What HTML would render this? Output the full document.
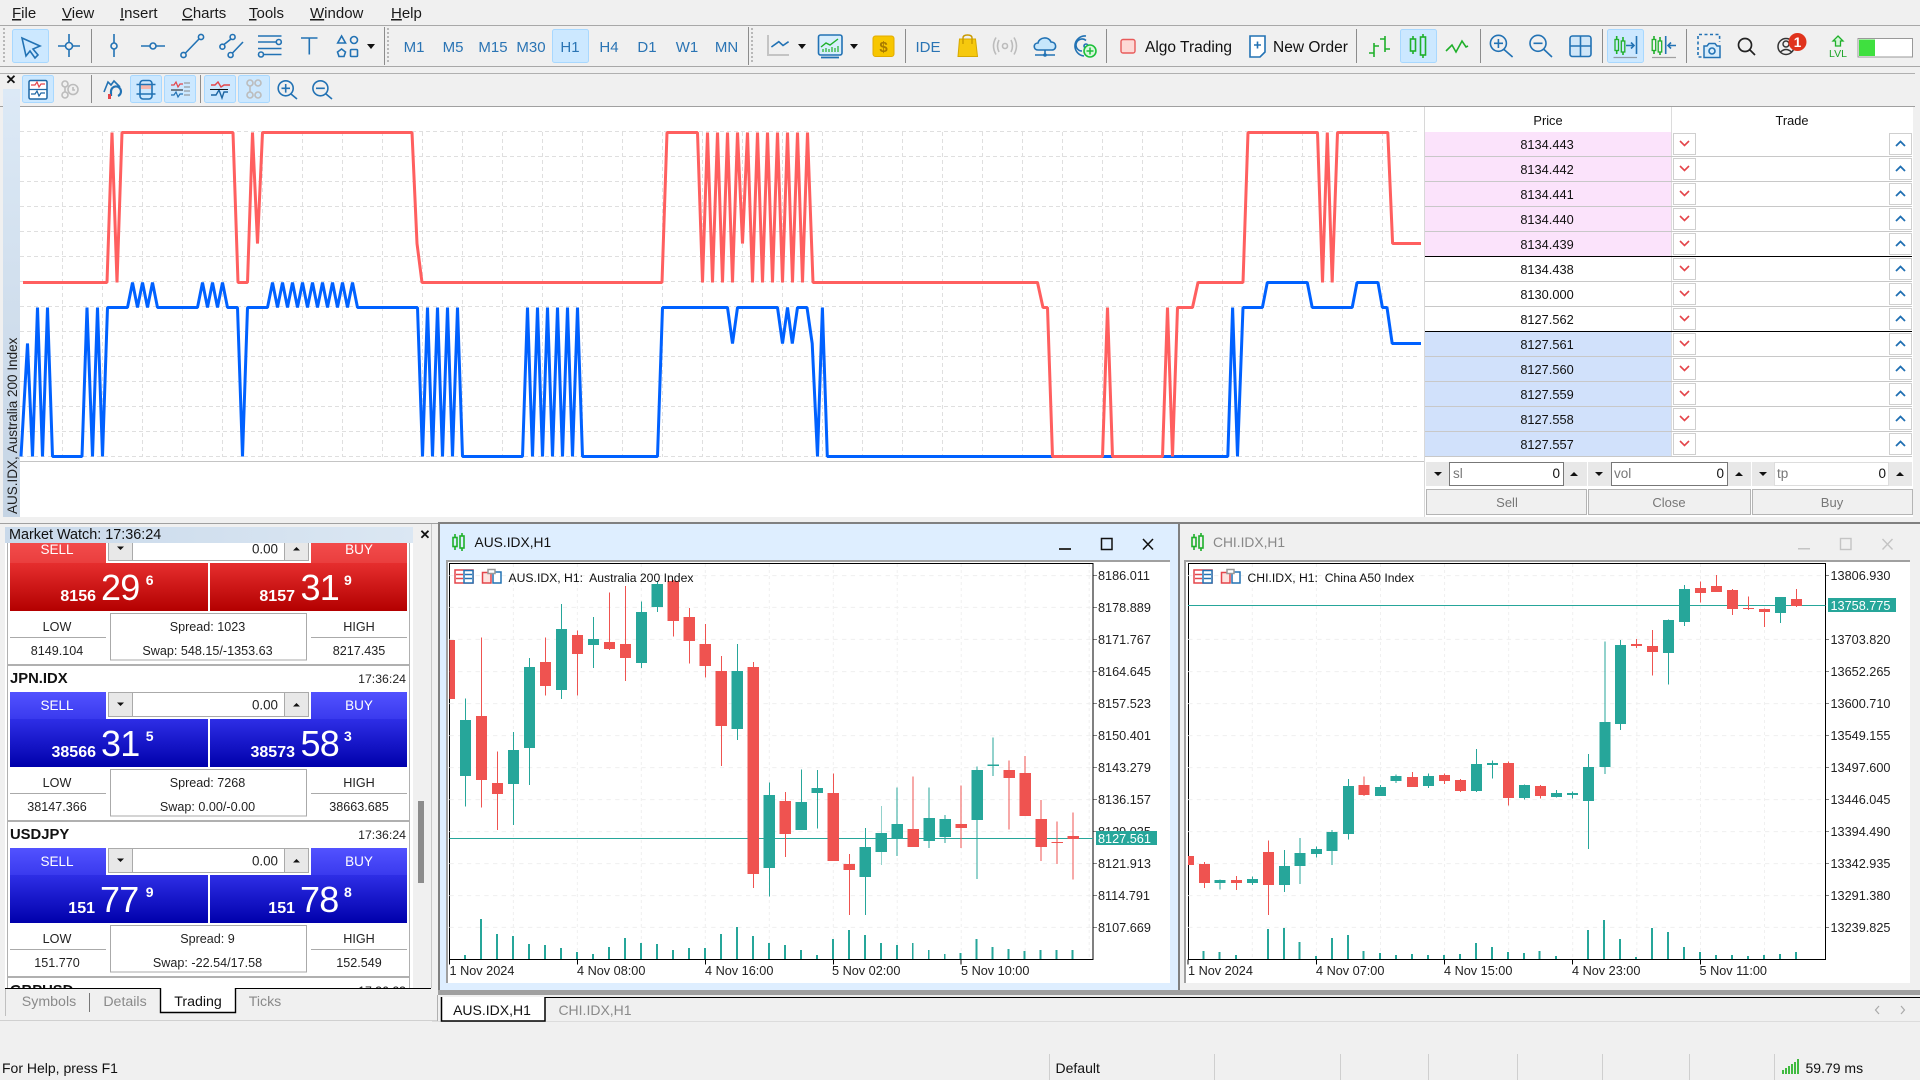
<!DOCTYPE html>
<html><head><meta charset="utf-8"><title>MetaTrader</title>
<style>
html,body{margin:0;padding:0;background:#f0f0f0;width:1920px;height:1080px;overflow:hidden}
svg{position:absolute;left:0;top:0;display:block}
text{font-family:"Liberation Sans",sans-serif;white-space:pre}
.m{font-size:15px;fill:#1a1a1a}
.tf{font-size:15px;fill:#2a74b4;text-anchor:middle}
.i{fill:none;stroke:#2272b4;stroke-width:1.6}
.g{fill:none;stroke:#1fb02a;stroke-width:1.6}
.y{fill:none;stroke:#bcbcbc;stroke-width:1.6}
.r{fill:none;stroke:#e4454a;stroke-width:1.6}
.p{font-size:12.8px;fill:#111;text-anchor:middle}
.l{font-size:12.6px;fill:#222;text-anchor:middle}
.w{fill:#fff}
.ax{font-size:12.7px;fill:#222}
.cx{font-size:15px;fill:#333;text-anchor:end}
</style></head><body>
<svg width="1920" height="1080" viewBox="0 0 1920 1080">
<defs>
<linearGradient id="bh" x1="0" y1="0" x2="0" y2="1"><stop offset="0" stop-color="#5252ff"/><stop offset="1" stop-color="#3a3aee"/></linearGradient>
<linearGradient id="bl" x1="0" y1="0" x2="0" y2="1"><stop offset="0" stop-color="#2e2ee6"/><stop offset="1" stop-color="#0000ab"/></linearGradient>
<linearGradient id="rh" x1="0" y1="0" x2="0" y2="1"><stop offset="0" stop-color="#f65050"/><stop offset="1" stop-color="#ea3e3e"/></linearGradient>
<linearGradient id="rl" x1="0" y1="0" x2="0" y2="1"><stop offset="0" stop-color="#e62e2e"/><stop offset="1" stop-color="#b30000"/></linearGradient>
<linearGradient id="tb" x1="0" y1="0" x2="1" y2="0"><stop offset="0" stop-color="#c9d9ea"/><stop offset="1" stop-color="#dbe7f3"/></linearGradient>
<linearGradient id="vb" x1="0" y1="0" x2="0" y2="1"><stop offset="0" stop-color="#dce9f6"/><stop offset="1" stop-color="#c5d4e4"/></linearGradient>
</defs>
<defs><clipPath id="mwc"><rect x="5" y="543" width="408" height="445"/></clipPath></defs>

<rect width="1920" height="1080" fill="#f0f0f0"/>
<text x="12" y="18" class="m"><tspan text-decoration="underline">F</tspan>ile</text>
<text x="62" y="18" class="m"><tspan text-decoration="underline">V</tspan>iew</text>
<text x="120" y="18" class="m"><tspan text-decoration="underline">I</tspan>nsert</text>
<text x="182" y="18" class="m"><tspan text-decoration="underline">C</tspan>harts</text>
<text x="249" y="18" class="m"><tspan text-decoration="underline">T</tspan>ools</text>
<text x="310" y="18" class="m"><tspan text-decoration="underline">W</tspan>indow</text>
<text x="391" y="18" class="m"><tspan text-decoration="underline">H</tspan>elp</text>
<rect x="0" y="25" width="1920" height="1" fill="#a8a8a8"/>
<rect x="0" y="66" width="1920" height="1" fill="#a8a8a8"/>
<rect x="0" y="73" width="1915" height="1" fill="#b0b0b0"/>
<rect x="0" y="106" width="1915" height="1" fill="#a0a0a0"/>

<g fill="#cce8ff" stroke="#a8d8ff">
<rect x="12.5" y="29.5" width="36" height="33" rx="2"/>
<rect x="552.5" y="29.5" width="36" height="33" rx="2"/>
<rect x="1400.5" y="29.5" width="36" height="33" rx="2"/>
<rect x="1607.5" y="29.5" width="36" height="33" rx="2"/>
<rect x="22.5" y="75.5" width="31" height="27" rx="2"/>
<rect x="130.5" y="75.5" width="31" height="27" rx="2"/>
<rect x="164.5" y="75.5" width="31" height="27" rx="2"/>
<rect x="204.5" y="75.5" width="31" height="27" rx="2"/>
<rect x="238.5" y="75.5" width="31" height="27" rx="2"/>
</g>
<g fill="#8c8c8c">
<rect x="91" y="29" width="1" height="34"/><rect x="748" y="27" width="1" height="38"/><rect x="384" y="27" width="1" height="38"/>
<rect x="905" y="29" width="1" height="34"/><rect x="1106" y="29" width="1" height="34"/><rect x="1356" y="29" width="1" height="34"/>
<rect x="1480" y="29" width="1" height="34"/><rect x="1602" y="29" width="1" height="34"/><rect x="1686" y="29" width="1" height="34"/>
<rect x="91" y="75" width="1" height="28"/><rect x="200" y="75" width="1" height="28"/>
</g>
<g stroke="#b8b8b8" stroke-width="2" stroke-dasharray="2 2"><path d="M4 28V64M388 28V64M752 28V64"/></g>

<path class="i" d="M22 38L40 46L33 49L38 55L35 58L30 51L26 56Z"/>
<path class="i" d="M58 46H65M73 46H80M69 34V42M69 50V57"/><circle class="i" cx="69" cy="46" r="3.5"/>
<path class="i" d="M114 34V43M114 49V57"/><circle class="i" cx="114" cy="46" r="3"/>
<path class="i" d="M141 46H150M156 46H165"/><circle class="i" cx="153" cy="46" r="3"/>
<path class="i" d="M185.5 53L199 39"/><circle class="i" cx="183.5" cy="55" r="2.6"/><circle class="i" cx="201" cy="37" r="2.6"/>
<path class="i" d="M224 44.5L231 39M232.5 53L243 42"/><circle class="i" cx="222.4" cy="46.7" r="2.5"/><circle class="i" cx="232.6" cy="37" r="2.5"/><circle class="i" cx="230.6" cy="55" r="2.5"/>
<path class="i" d="M258 36H281.5M258 42H276M258 48.5H281.5M264 54.5H281.5"/><circle class="i" cx="278.8" cy="42" r="2.5"/><circle class="i" cx="261" cy="54.5" r="2.5"/>
<path class="i" d="M301 38H317.5M309.3 38V54.5"/>
<path class="i" d="M341.6 36L345.5 43H337.7Z"/><circle class="i" cx="354" cy="40" r="3.5"/><path class="i" d="M341.6 49L345.5 52L344 56.5H339L337.5 52Z"/><rect class="i" x="350.5" y="49.5" width="7" height="7" rx="1"/>
<path d="M367 44H375L371 49Z" fill="#111"/>

<text class="tf" x="414" y="52">M1</text><text class="tf" x="453" y="52">M5</text><text class="tf" x="493" y="52">M15</text><text class="tf" x="531" y="52">M30</text><text class="tf" x="570" y="52">H1</text><text class="tf" x="609" y="52">H4</text><text class="tf" x="647" y="52">D1</text><text class="tf" x="687" y="52">W1</text><text class="tf" x="726.5" y="52">MN</text>

<path d="M768 35V55H789" fill="none" stroke="#c4c4c4" stroke-width="2"/>
<path class="i" d="M771.4 47L778.8 41.7L783 45.5L788.6 41.7"/>
<path d="M798 44H806L802 49Z" fill="#111"/>
<rect x="818.5" y="35" width="23.5" height="20" rx="2" fill="#d8eefc" stroke="#2272b4" stroke-width="1.6"/>
<path d="M821 47L826 43L830 45L838 39" fill="none" stroke="#1fb02a" stroke-width="1.4"/>
<path d="M823 52V49M826 52V48M829 52V49M832 52V47M835 52V48M838 52V46" stroke="#1fb02a" stroke-width="1.2"/>
<path d="M821 57.5H839" stroke="#2272b4" stroke-width="1.8"/>
<path d="M850 44H858L854 49Z" fill="#111"/>
<rect x="873" y="36" width="21" height="20.5" rx="2.5" fill="#f7c600" stroke="#e2ab00"/>
<text x="883.5" y="52" font-size="15" font-weight="bold" text-anchor="middle" fill="#a87a00">$</text>
<text class="tf" x="928" y="52">IDE</text>
<path d="M959.5 39H975.5L977.5 56.5H958Z" fill="#f6c90e" stroke="#d6a800"/>
<path d="M963 44V38Q963 35 967.5 35Q972 35 972 38V44" fill="none" stroke="#c99a00" stroke-width="1.4"/>
<circle class="y" cx="1005" cy="46" r="2.5"/><path class="y" d="M999 40Q996 46 999 52M1011 40Q1014 46 1011 52M996 37.5Q991 46 996 54.5M1014 37.5Q1019 46 1014 54.5"/>
<path d="M1038 50C1033 50 1033 43 1038 43C1039 37 1049 36 1051 42C1057 42 1057 50 1052 50Z" fill="#c6e6fb" stroke="#2272b4" stroke-width="1.6"/>
<path class="i" d="M1045 50V55M1035 55H1055"/><circle cx="1045" cy="55" r="1.8" fill="#2272b4"/>
<g transform="translate(2 0)"><path class="i" d="M1084 36A10 10 0 1 0 1082 56M1084 40.500A6 6 0 1 0 1080 51"/><circle class="i" cx="1084" cy="46" r="2"/>
<circle cx="1088" cy="51" r="6" fill="#d9f7dc" stroke="#1cc03a" stroke-width="1.6"/><path d="M1084.5 51H1091.5M1088 47.5V54.5" stroke="#1cc03a" stroke-width="1.5"/></g>
<rect x="1121" y="39.5" width="14" height="13.5" rx="2" fill="#fdd9d6" stroke="#e85a5a" stroke-width="1.4"/>
<text x="1145" y="52" font-size="15.5" fill="#111">Algo Trading</text>
<path d="M1250 36H1265V52L1260 57H1250Z" fill="#fff" stroke="#2272b4" stroke-width="1.6"/><path class="i" d="M1254 45H1261M1257.5 41.5V48.5"/>
<text x="1273" y="52" font-size="15.5" fill="#111">New Order</text>
<path class="g" d="M1374 43V57M1369 53H1374M1374 46H1379M1385 36V52M1380 39H1385M1385 49H1390"/>
<path class="g" d="M1413 36V39M1413 51V54M1423 34V37M1423 55V58"/><rect class="g" x="1410.5" y="39" width="5" height="12"/><rect class="g" x="1420.5" y="37" width="5" height="18"/>
<path class="g" d="M1446 51L1452 45L1456 52L1462 41L1466 47L1468 46"/>
<circle class="i" cx="1498.4" cy="43.3" r="8"/><path class="i" d="M1504 49.5L1512.6 57M1494 43.3H1503M1498.4 39V48"/>
<circle class="i" cx="1538" cy="43.3" r="8"/><path class="i" d="M1544 49.5L1552 57M1533.5 43.3H1542.5"/>
<rect x="1570" y="36" width="21" height="20.5" rx="2.5" fill="#cfe6f8" stroke="#2272b4" stroke-width="1.6"/><path class="i" d="M1580.5 36V56.5M1570 46H1591"/>
<path class="g" d="M1616.7 36V54M1623 37V55"/><rect x="1615" y="39.5" width="3.5" height="11" fill="#cce8ff" stroke="#1fb02a" stroke-width="1.3"/><rect x="1621.3" y="41" width="3.5" height="11" fill="#cce8ff" stroke="#1fb02a" stroke-width="1.3"/>
<path class="i" d="M1626 45.5H1634M1631 42.5L1634 45.5L1631 48.5M1636.5 36V54"/><path d="M1613.5 57.5H1637" stroke="#8f9ba6" stroke-width="1.2"/>
<path class="g" d="M1654 36V54M1660 37V55"/><rect x="1652.2" y="39.5" width="3.5" height="11" fill="#f0f0f0" stroke="#1fb02a" stroke-width="1.3"/><rect x="1658.2" y="41" width="3.5" height="11" fill="#f0f0f0" stroke="#1fb02a" stroke-width="1.3"/>
<path class="i" d="M1665.7 36V54M1668 45.5H1676M1671 42.5L1668 45.5L1671 48.5"/><path d="M1652 57.5H1676" stroke="#a0a0a0" stroke-width="1.2"/>
<path d="M1698 50V34.5H1719.6V42M1698 52V57H1702" fill="none" stroke="#2272b4" stroke-width="1.6" stroke-dasharray="3 2.5"/>
<path d="M1704 46H1707L1709 43.5H1715L1717 46H1720V57.5H1704Z" fill="#d6ecfb" stroke="#2272b4" stroke-width="1.5"/><circle class="i" cx="1712" cy="51" r="3"/>
<circle cx="1745" cy="45" r="6.5" fill="none" stroke="#222" stroke-width="1.7"/><path d="M1750 50L1755 55" stroke="#222" stroke-width="1.7"/>
<circle cx="1786" cy="46.5" r="8" fill="none" stroke="#333" stroke-width="1.5"/><circle cx="1786" cy="44" r="3" fill="none" stroke="#333" stroke-width="1.4"/><path d="M1780.5 52Q1786 47 1791.5 52" fill="none" stroke="#333" stroke-width="1.4"/>
<circle cx="1797.5" cy="42" r="9" fill="#e0331c"/><text x="1797.5" y="47" font-size="13.5" font-weight="bold" fill="#fff" text-anchor="middle">1</text>
<path d="M1838 36L1843 41H1840.5V46H1835.5V41H1833Z" fill="#d4f5d8" stroke="#1fb02a" stroke-width="1.3"/>
<text x="1838" y="57" font-size="10.5" fill="#1fa52a" text-anchor="middle">LVL</text>
<rect x="1858" y="38.5" width="54.5" height="18.5" fill="#fff" stroke="#999"/><rect x="1859" y="39.5" width="16" height="16.5" fill="#3fe03f"/>

<text x="11" y="84" font-size="13" font-weight="bold" text-anchor="middle" fill="#111">✕</text>
<rect x="29" y="80.5" width="18" height="18.5" rx="1.5" fill="#fff" stroke="#1d66a3" stroke-width="1.5"/>
<path d="M31 85H35L37 82L39 87L41 84H45" fill="none" stroke="#e4454a" stroke-width="1.2"/><path d="M31 94H35L37 91L39 96L41 93H45M29 89.5H47" fill="none" stroke="#1d66a3" stroke-width="1.2"/>
<circle class="y" cx="65" cy="84" r="3"/><circle class="y" cx="65" cy="95" r="3"/><circle class="y" cx="73" cy="89.5" r="5"/><path class="y" d="M65 87V92M73 87V90H75"/>
<path class="i" d="M104 92L108 82L111 85L114 81L120 87"/><path d="M111 96V91A5 5 0 1 1 118 96" fill="none" stroke="#2272b4" stroke-width="2.2"/><rect x="108" y="94" width="3" height="5" fill="#e4454a"/>
<rect x="140" y="80.5" width="12" height="18.5" rx="3" fill="none" stroke="#2272b4" stroke-width="1.6"/><rect x="141" y="84" width="10" height="5" fill="#f7b7ad"/><path class="i" d="M136.5 84.5H155.5M136.5 94H155.5"/>
<path d="M171 85H174L176 82L178 87L180 84H183" fill="none" stroke="#e4454a" stroke-width="1.2"/><path d="M171 95H174L176 92L178 97L180 94H183" fill="none" stroke="#2272b4" stroke-width="1.2"/><path d="M171 90H183" stroke="#111"/><path d="M184 83H190M184 87H190M184 91H190M184 95H190" stroke="#888"/>
<path d="M211 85H215L218 82L221 87L224 85H230" fill="none" stroke="#e4454a" stroke-width="1.4"/><path d="M211 95H216L219 90L222 98L224 92L228 92" fill="none" stroke="#1d66a3" stroke-width="1.4"/><path d="M210 89.5H228" stroke="#111"/>
<circle class="y" cx="250" cy="83" r="3"/><circle class="y" cx="258" cy="83" r="3"/><circle class="y" cx="250" cy="95" r="3"/><circle class="y" cx="258" cy="95" r="3"/><path class="y" d="M250 86V92"/>
<circle class="i" cx="285.7" cy="88.3" r="7.5"/><path class="i" d="M291 94L297 99M281.5 88.3H290M285.7 84V92.6"/>
<circle class="i" cx="320.4" cy="88.3" r="7.5"/><path class="i" d="M326 94L332 99M316 88.3H324.8"/>

<rect x="3" y="89" width="17" height="428" fill="url(#vb)"/>
<text transform="translate(17 514) rotate(-90)" font-size="13.5" fill="#222">AUS.IDX, Australia 200 Index</text>

<rect x="20" y="107" width="1893" height="410" fill="#fff"/>
<g stroke="#dfdfdf" stroke-width="1" stroke-dasharray="4 3" fill="none">
<path d="M20 131.5H1420M20 156.5H1420M20 181.5H1420M20 206.5H1420M20 231.5H1420M20 256.5H1420M20 281.5H1420M20 306.5H1420M20 331.5H1420M20 356.5H1420M20 381.5H1420M20 406.5H1420M20 431.5H1420M20 456.5H1420"/>
<path d="M62.5 132V457M102.5 132V457M142.5 132V457M182.5 132V457M222.5 132V457M262.5 132V457M302.5 132V457M342.5 132V457M382.5 132V457M422.5 132V457M462.5 132V457M502.5 132V457M542.5 132V457M582.5 132V457M622.5 132V457M662.5 132V457M702.5 132V457M742.5 132V457M782.5 132V457M822.5 132V457M862.5 132V457M902.5 132V457M942.5 132V457M982.5 132V457M1022.5 132V457M1062.5 132V457M1102.5 132V457M1142.5 132V457M1182.5 132V457M1222.5 132V457M1262.5 132V457M1302.5 132V457M1342.5 132V457M1382.5 132V457"/>
</g>
<rect x="20" y="461" width="1404" height="1" fill="#c4c4c4"/>
<polyline fill="none" stroke="#0061ff" stroke-width="3" stroke-linejoin="bevel" points="21,456.5 27.5,343.5 32.5,456.5 37.5,307.5 42.5,456.5 47.5,307.5 52.5,456.5 82,456.5 87,307.5 92.5,456.5 97.5,307.5 102.5,456.5 107.5,307.5 127.5,307.5 132.5,282.5 137.5,307.5 142.5,282.5 147.5,307.5 152.5,282.5 157.5,307.5 197.5,307.5 202.5,282.5 207.5,307.5 212.5,282.5 217.5,307.5 222.5,282.5 227.5,307.5 237.5,307.5 242.5,456.5 247.5,307.5 267.5,307.5 272.5,282.5 277.5,307.5 282.5,282.5 287.5,307.5 292.5,282.5 297.5,307.5 302.5,282.5 307.5,307.5 312.5,282.5 317.5,307.5 322.5,282.5 327.5,307.5 332.5,282.5 337.5,307.5 342.5,282.5 347.5,307.5 352.5,282.5 357.5,307.5 417.5,307.5 422.5,456.5 427.5,307.5 432.5,456.5 437.5,307.5 442.5,456.5 447.5,307.5 452.5,456.5 457.5,307.5 462.5,456.5 522.5,456.5 527.5,307.5 532.5,456.5 537.5,307.5 542.5,456.5 547.5,307.5 552.5,456.5 557.5,307.5 562.5,456.5 567.5,307.5 572.5,456.5 577.5,307.5 582.5,456.5 657.5,456.5 662.5,307.5 727.5,307.5 732.5,343.5 737.5,307.5 777.5,307.5 782.5,343.5 787.5,307.5 792.3,343.5 797.5,307.5 807,307.5 812.2,343.5 817.5,456.5 822.4,307.5 827.3,456.5 1227.8,456.5 1232.6,307.5 1237.5,456.5 1243,307.5 1262.4,307.5 1267.3,282.5 1307.3,282.5 1312.2,307.5 1352.2,307.5 1357,282.5 1378,282.5 1382.4,307.5 1387,307.5 1392.2,343.5 1421,343.5"/>
<polyline fill="none" stroke="#ff5f5f" stroke-width="3" stroke-linejoin="bevel" points="23,282.5 107,282.5 112,132.5 117,282.5 122,132.5 233,132.5 238,282.5 247.5,282.5 252.5,132.5 257.5,243.5 262.5,132.5 412,132.5 417,243.5 422,282.5 662,282.5 667,132.5 697.5,132.5 702.5,282.5 707.5,132.5 712.5,282.5 717.5,132.5 722.5,282.5 727.5,132.5 732.5,282.5 737.5,132.5 742.5,243.5 747.5,132.5 752.5,282.5 757.5,132.5 762.5,282.5 767.5,132.5 772.5,282.5 777.5,132.5 782.5,282.5 787.5,132.5 792.5,282.5 797.5,132.5 802.5,282.5 807.5,132.5 813,282.5 1037.5,282.5 1043,307.5 1047.5,307.5 1052.5,456.5 1102.5,456.5 1107.5,307.5 1112.5,456.5 1162.5,456.5 1167.5,307.5 1172.5,456.5 1177.5,307.5 1192.5,307.5 1198,282.5 1243,282.5 1248,132.5 1317.5,132.5 1322.5,282.5 1327.3,132.5 1332.2,282.5 1337.5,132.5 1387.8,132.5 1392.6,243.5 1421,243.5"/>

<rect x="1424" y="107" width="1" height="410" fill="#d8d8d8"/>
<rect x="1425" y="132" width="246" height="125" fill="#fbe3fb"/>
<rect x="1425" y="332" width="246" height="125" fill="#d1e1fb"/>
<rect x="1671" y="107" width="1" height="350" fill="#dcdcdc"/>
<text class="p" x="1548" y="125">Price</text><text class="p" x="1792" y="125">Trade</text>
<g fill="#c8c8c8">
<rect x="1425" y="156" width="487" height="1"/><rect x="1425" y="181" width="487" height="1"/><rect x="1425" y="206" width="487" height="1"/><rect x="1425" y="231" width="487" height="1"/><rect x="1425" y="281" width="487" height="1"/><rect x="1425" y="306" width="487" height="1"/><rect x="1425" y="356" width="487" height="1"/><rect x="1425" y="381" width="487" height="1"/><rect x="1425" y="406" width="487" height="1"/><rect x="1425" y="431" width="487" height="1"/><rect x="1425" y="456" width="487" height="1"/>
</g>
<rect x="1425" y="256" width="487" height="1" fill="#000"/><rect x="1425" y="331" width="487" height="1" fill="#000"/>
<text class="p" x="1547" y="149">8134.443</text><text class="p" x="1547" y="174">8134.442</text><text class="p" x="1547" y="199">8134.441</text><text class="p" x="1547" y="224">8134.440</text><text class="p" x="1547" y="249">8134.439</text><text class="p" x="1547" y="274">8134.438</text><text class="p" x="1547" y="299">8130.000</text><text class="p" x="1547" y="324">8127.562</text><text class="p" x="1547" y="349">8127.561</text><text class="p" x="1547" y="374">8127.560</text><text class="p" x="1547" y="399">8127.559</text><text class="p" x="1547" y="424">8127.558</text><text class="p" x="1547" y="449">8127.557</text>
<g fill="#fff" stroke="#cfcfcf">
<path d="M1673.5 133.5h22v21h-22zM1673.5 158.5h22v21h-22zM1673.5 183.5h22v21h-22zM1673.5 208.5h22v21h-22zM1673.5 233.5h22v21h-22zM1673.5 258.5h22v21h-22zM1673.5 283.5h22v21h-22zM1673.5 308.5h22v21h-22zM1673.5 333.5h22v21h-22zM1673.5 358.5h22v21h-22zM1673.5 383.5h22v21h-22zM1673.5 408.5h22v21h-22zM1673.5 433.5h22v21h-22z"/>
<path d="M1889.5 133.5h22v21h-22zM1889.5 158.5h22v21h-22zM1889.5 183.5h22v21h-22zM1889.5 208.5h22v21h-22zM1889.5 233.5h22v21h-22zM1889.5 258.5h22v21h-22zM1889.5 283.5h22v21h-22zM1889.5 308.5h22v21h-22zM1889.5 333.5h22v21h-22zM1889.5 358.5h22v21h-22zM1889.5 383.5h22v21h-22zM1889.5 408.5h22v21h-22zM1889.5 433.5h22v21h-22z"/>
</g>
<path fill="none" stroke="#e4454a" stroke-width="1.6" d="M1680 141l4.5 4.5 4.5-4.5M1680 166l4.5 4.5 4.5-4.5M1680 191l4.5 4.5 4.5-4.5M1680 216l4.5 4.5 4.5-4.5M1680 241l4.5 4.5 4.5-4.5M1680 266l4.5 4.5 4.5-4.5M1680 291l4.5 4.5 4.5-4.5M1680 316l4.5 4.5 4.5-4.5M1680 341l4.5 4.5 4.5-4.5M1680 366l4.5 4.5 4.5-4.5M1680 391l4.5 4.5 4.5-4.5M1680 416l4.5 4.5 4.5-4.5M1680 441l4.5 4.5 4.5-4.5"/>
<path fill="none" stroke="#1f6fb2" stroke-width="1.8" d="M1896 146l4.5-4.5 4.5 4.5M1896 171l4.5-4.5 4.5 4.5M1896 196l4.5-4.5 4.5 4.5M1896 221l4.5-4.5 4.5 4.5M1896 246l4.5-4.5 4.5 4.5M1896 271l4.5-4.5 4.5 4.5M1896 296l4.5-4.5 4.5 4.5M1896 321l4.5-4.5 4.5 4.5M1896 346l4.5-4.5 4.5 4.5M1896 371l4.5-4.5 4.5 4.5M1896 396l4.5-4.5 4.5 4.5M1896 421l4.5-4.5 4.5 4.5M1896 446l4.5-4.5 4.5 4.5"/>
<g fill="#e8e8e8"><rect x="1426" y="462" width="161" height="24"/><rect x="1588" y="462" width="163" height="24"/><rect x="1752" y="462" width="160" height="24"/></g>
<g fill="#fff" stroke="#777"><rect x="1449.5" y="462.5" width="114" height="23"/><rect x="1611.5" y="462.5" width="116" height="23"/></g>
<rect x="1774.5" y="462.5" width="114" height="23" fill="#fff" stroke="#ddd"/>
<path fill="#111" d="M1434 472h8l-4 4zM1570 476h8l-4-4zM1595 472h8l-4 4zM1735 476h8l-4-4zM1759 472h8l-4 4zM1896 476h8l-4-4z"/>
<g font-size="13.5"><text x="1453" y="478" fill="#777">sl</text><text x="1560" y="478" fill="#111" text-anchor="end">0</text><text x="1614" y="478" fill="#777">vol</text><text x="1724" y="478" fill="#111" text-anchor="end">0</text><text x="1777" y="478" fill="#777">tp</text><text x="1886" y="478" fill="#111" text-anchor="end">0</text></g>
<g fill="#f0f0f0" stroke="#b4b4b4"><rect x="1426.5" y="489.5" width="160" height="25"/><rect x="1588.5" y="489.5" width="162" height="25"/><rect x="1752.5" y="489.5" width="160" height="25"/></g>
<g font-size="13" fill="#777" text-anchor="middle"><text x="1507" y="507">Sell</text><text x="1669" y="507">Close</text><text x="1832" y="507">Buy</text></g>
<rect x="1424" y="517" width="496" height="5" fill="#f0f0f0"/>

<rect x="0" y="523" width="438" height="1" fill="#a0a0a0"/>
<rect x="5" y="527" width="408" height="16" fill="url(#tb)"/>
<text x="9" y="539" font-size="14.4" fill="#111">Market Watch: 17:36:24</text>
<text x="425" y="539" font-size="13" font-weight="bold" text-anchor="middle" fill="#111">✕</text>
<rect x="5" y="543" width="408" height="445" fill="#fff"/>
<rect x="418" y="801" width="6" height="82" fill="#8c8c8c"/>
<rect x="431" y="524" width="1" height="464" fill="#c8c8c8"/>
<g clip-path="url(#mwc)">
<g transform="translate(0 509)">
<rect x="7.5" y=".5" width="402" height="155" fill="#fff" stroke="#b0b0b0"/>
<rect x="10" y="27" width="96" height="27" fill="url(#rh)"/><rect x="311" y="27" width="96" height="27" fill="url(#rh)"/>
<text x="57" y="45" font-size="13.5" class="w" text-anchor="middle">SELL</text><text x="359" y="45" font-size="13.5" class="w" text-anchor="middle">BUY</text>
<rect x="108.5" y="27.5" width="200" height="24" fill="#fff" stroke="#aaa"/><rect x="108.5" y="27.5" width="24" height="24" fill="#e8e8e8" stroke="#aaa"/><rect x="284.5" y="27.5" width="24" height="24" fill="#e8e8e8" stroke="#aaa"/>
<path d="M117 37.5h7l-3.5 3.5zM293 41.5h7l-3.5-3.5z" fill="#111"/>
<text x="278" y="44.5" font-size="13.4" fill="#222" text-anchor="end">0.00</text>
<rect x="10" y="54" width="198" height="48" fill="url(#rl)"/><rect x="210" y="54" width="197" height="48" fill="url(#rl)"/>
<text x="96" y="92" font-size="16" font-weight="bold" class="w" text-anchor="end">8156</text><text x="101" y="91" font-size="36" class="w" letter-spacing="-.8">29</text><text x="145.7" y="76" font-size="14" font-weight="bold" class="w">6</text>
<text x="295" y="92" font-size="16" font-weight="bold" class="w" text-anchor="end">8157</text><text x="300.5" y="91" font-size="36" class="w" letter-spacing="-.8">31</text><text x="344" y="76" font-size="14" font-weight="bold" class="w">9</text>
<text class="l" x="57" y="122">LOW</text><rect x="10" y="128" width="96" height="1" fill="#aaa"/><text class="l" x="57" y="146">8149.104</text>
<rect x="110.5" y="104.5" width="196" height="46.5" fill="#fff" stroke="#aaa"/><text class="l" x="207.5" y="122">Spread: 1023</text><text class="l" x="207.5" y="146">Swap: 548.15/-1353.63</text>
<text class="l" x="359" y="122">HIGH</text><rect x="311" y="128" width="96" height="1" fill="#aaa"/><text class="l" x="359" y="146">8217.435</text>
</g>
<g transform="translate(0 665)">
<rect x="7.5" y=".5" width="402" height="155" fill="#fff" stroke="#b0b0b0"/>
<text x="10" y="18" font-size="14.8" font-weight="bold" fill="#111">JPN.IDX</text><text x="406" y="18" font-size="12.3" fill="#222" text-anchor="end">17:36:24</text>
<rect x="10" y="27" width="96" height="27" fill="url(#bh)"/><rect x="311" y="27" width="96" height="27" fill="url(#bh)"/>
<text x="57" y="45" font-size="13.5" class="w" text-anchor="middle">SELL</text><text x="359" y="45" font-size="13.5" class="w" text-anchor="middle">BUY</text>
<rect x="108.5" y="27.5" width="200" height="24" fill="#fff" stroke="#aaa"/><rect x="108.5" y="27.5" width="24" height="24" fill="#e8e8e8" stroke="#aaa"/><rect x="284.5" y="27.5" width="24" height="24" fill="#e8e8e8" stroke="#aaa"/>
<path d="M117 37.5h7l-3.5 3.5zM293 41.5h7l-3.5-3.5z" fill="#111"/>
<text x="278" y="44.5" font-size="13.4" fill="#222" text-anchor="end">0.00</text>
<rect x="10" y="54" width="198" height="48" fill="url(#bl)"/><rect x="210" y="54" width="197" height="48" fill="url(#bl)"/>
<text x="96" y="92" font-size="16" font-weight="bold" class="w" text-anchor="end">38566</text><text x="101" y="91" font-size="36" class="w" letter-spacing="-.8">31</text><text x="145.7" y="76" font-size="14" font-weight="bold" class="w">5</text>
<text x="295" y="92" font-size="16" font-weight="bold" class="w" text-anchor="end">38573</text><text x="300.5" y="91" font-size="36" class="w" letter-spacing="-.8">58</text><text x="344" y="76" font-size="14" font-weight="bold" class="w">3</text>
<text class="l" x="57" y="122">LOW</text><rect x="10" y="128" width="96" height="1" fill="#aaa"/><text class="l" x="57" y="146">38147.366</text>
<rect x="110.5" y="104.5" width="196" height="46.5" fill="#fff" stroke="#aaa"/><text class="l" x="207.5" y="122">Spread: 7268</text><text class="l" x="207.5" y="146">Swap: 0.00/-0.00</text>
<text class="l" x="359" y="122">HIGH</text><rect x="311" y="128" width="96" height="1" fill="#aaa"/><text class="l" x="359" y="146">38663.685</text>
</g>
<g transform="translate(0 821)">
<rect x="7.5" y=".5" width="402" height="155" fill="#fff" stroke="#b0b0b0"/>
<text x="10" y="18" font-size="14.8" font-weight="bold" fill="#111">USDJPY</text><text x="406" y="18" font-size="12.3" fill="#222" text-anchor="end">17:36:24</text>
<rect x="10" y="27" width="96" height="27" fill="url(#bh)"/><rect x="311" y="27" width="96" height="27" fill="url(#bh)"/>
<text x="57" y="45" font-size="13.5" class="w" text-anchor="middle">SELL</text><text x="359" y="45" font-size="13.5" class="w" text-anchor="middle">BUY</text>
<rect x="108.5" y="27.5" width="200" height="24" fill="#fff" stroke="#aaa"/><rect x="108.5" y="27.5" width="24" height="24" fill="#e8e8e8" stroke="#aaa"/><rect x="284.5" y="27.5" width="24" height="24" fill="#e8e8e8" stroke="#aaa"/>
<path d="M117 37.5h7l-3.5 3.5zM293 41.5h7l-3.5-3.5z" fill="#111"/>
<text x="278" y="44.5" font-size="13.4" fill="#222" text-anchor="end">0.00</text>
<rect x="10" y="54" width="198" height="48" fill="url(#bl)"/><rect x="210" y="54" width="197" height="48" fill="url(#bl)"/>
<text x="95" y="92" font-size="16" font-weight="bold" class="w" text-anchor="end">151</text><text x="100" y="91" font-size="36" class="w" letter-spacing="-.8">77</text><text x="145.7" y="76" font-size="14" font-weight="bold" class="w">9</text>
<text x="295" y="92" font-size="16" font-weight="bold" class="w" text-anchor="end">151</text><text x="300" y="91" font-size="36" class="w" letter-spacing="-.8">78</text><text x="344" y="76" font-size="14" font-weight="bold" class="w">8</text>
<text class="l" x="57" y="122">LOW</text><rect x="10" y="128" width="96" height="1" fill="#aaa"/><text class="l" x="57" y="146">151.770</text>
<rect x="110.5" y="104.5" width="196" height="46.5" fill="#fff" stroke="#aaa"/><text class="l" x="207.5" y="122">Spread: 9</text><text class="l" x="207.5" y="146">Swap: -22.54/17.58</text>
<text class="l" x="359" y="122">HIGH</text><rect x="311" y="128" width="96" height="1" fill="#aaa"/><text class="l" x="359" y="146">152.549</text>
</g>
<g transform="translate(0 977)">
<rect x="7.5" y=".5" width="402" height="155" fill="#fff" stroke="#b0b0b0"/>
<text x="10" y="18" font-size="14.8" font-weight="bold" fill="#111">GBPUSD</text><text x="406" y="18" font-size="12.3" fill="#222" text-anchor="end">17:36:23</text>
</g>
</g>
<rect x="5" y="988" width="426" height="1" fill="#000"/>
<rect x="5" y="989" width="1" height="27" fill="#c0c0c0"/>
<rect x="0" y="1020" width="438" height="1" fill="#d0d0d0"/>
<rect x="89" y="993" width="1" height="19" fill="#777"/>
<path d="M160.5 988V1012.5H235.5V988" fill="#fff" stroke="#000" stroke-width="1.4"/>
<g font-size="14.2" text-anchor="middle"><text x="49" y="1006" fill="#8a8a8a">Symbols</text><text x="125" y="1006" fill="#8a8a8a">Details</text><text x="198" y="1006" fill="#111">Trading</text><text x="265" y="1006" fill="#8a8a8a">Ticks</text></g>

<rect x="438" y="522" width="1482" height="2" fill="#808080"/>
<rect x="438" y="524" width="2" height="466" fill="#808080"/>
<rect x="440" y="524" width="738" height="466" fill="#deeeff"/>
<rect x="1178" y="524" width="2" height="466" fill="#808080"/>
<rect x="1180" y="524" width="740" height="466" fill="#f0f0f0"/>
<rect x="438" y="990" width="1482" height="5" fill="#a0a0a0"/>
<rect x="446" y="560" width="724" height="423" fill="#fff"/>
<path d="M447 983V561H1170" fill="none" stroke="#a0a0a0" stroke-width="2"/>
<rect x="1184" y="560" width="726" height="423" fill="#fff"/>
<path d="M1185 983V561H1910" fill="none" stroke="#a0a0a0" stroke-width="2"/>
<g stroke="#1fb02a" stroke-width="1.6" fill="none"><path d="M455 534V550M462 533V551"/><rect x="453" y="537.5" width="4" height="9" fill="#deeeff"/><rect x="460" y="536" width="4" height="12" fill="#deeeff"/></g>
<text x="474.5" y="547" font-size="13.8" fill="#111">AUS.IDX,H1</text>
<rect x="1059" y="548" width="12" height="2" fill="#333"/>
<rect x="1101.5" y="538.5" width="10.5" height="11" fill="none" stroke="#111" stroke-width="1.5"/>
<path d="M1143 539L1153 549.5M1153 539L1143 549.5" stroke="#111" stroke-width="1.5"/>
<g stroke="#1fb02a" stroke-width="1.6" fill="none"><path d="M1194 534V550M1201 533V551"/><rect x="1192" y="537.5" width="4" height="9" fill="#f0f0f0"/><rect x="1199" y="536" width="4" height="12" fill="#f0f0f0"/></g>
<text x="1213" y="547" font-size="13.8" fill="#888">CHI.IDX,H1</text>
<rect x="1798" y="548" width="12" height="1.5" fill="#c4c4c4"/>
<rect x="1840.5" y="538.5" width="10.5" height="11" fill="none" stroke="#c4c4c4" stroke-width="1.4"/>
<path d="M1882.5 539L1892.5 549.5M1892.5 539L1882.5 549.5" stroke="#c4c4c4" stroke-width="1.4"/>

<rect x="449.5" y="563.5" width="643.5" height="396" fill="#fff" stroke="#000"/>
<svg x="430" y="520" width="760" height="480" viewBox="0 0 1568 1440" preserveAspectRatio="none">
<g stroke="#efefef" stroke-dasharray="9 9" fill="none">
<path stroke-width="3" d="M40 167H1368M40 262H1368M40 358H1368M40 455H1368M40 551H1368M40 647H1368M40 743H1368M40 839H1368M40 935H1368M40 1031H1368M40 1127H1368M40 1222H1368"/>
<path stroke-width="2" d="M172 132V1318M304 132V1318M436 132V1318M568 132V1318M700 132V1318M832 132V1318M964 132V1318M1096 132V1318M1228 132V1318M1360 132V1318"/>
</g>
<path d="M40 955H1368" stroke="#26a69a" stroke-width="3" shape-rendering="crispEdges"/>
<path stroke="#000" stroke-width="2.06" d="M1368 167H1376M1368 262H1376M1368 358H1376M1368 455H1376M1368 551H1376M1368 647H1376M1368 743H1376M1368 839H1376M1368 935H1376M1368 1031H1376M1368 1127H1376M1368 1222H1376" shape-rendering="crispEdges"/>
<path stroke="#000" stroke-width="2.06" d="M40 1318V1334M304 1318V1334M568 1318V1334M832 1318V1334M1096 1318V1334" shape-rendering="crispEdges"/>
<g shape-rendering="crispEdges" fill="none">
<path stroke="#26a69a" stroke-width="4.1" d="M72 1305V1318M105 1197V1318M138 1242V1318M171 1248V1318M204 1272V1318M237 1275V1318M270 1284V1318M303 1296V1318M336 1302V1318M369 1281V1318M402 1254V1318M435 1269V1318M468 1272V1318M501 1290V1318M534 1284V1318M567 1284V1318M600 1242V1318M633 1221V1318M666 1248V1318M699 1269V1318M732 1275V1318M765 1290V1318M798 1305V1318M831 1257V1318M864 1230V1318M897 1245V1318M930 1269V1318M963 1275V1318M996 1269V1318M1029 1290V1318M1062 1302V1318M1095 1299V1318M1128 1257V1318M1161 1281V1318M1194 1287V1318M1227 1293V1318M1260 1290V1318M1293 1290V1318M1326 1290V1318"/>
<path stroke="#26a69a" stroke-width="2.06" d="M73 535V860M172 636V915M205 414V795M271 252V537M337 291V444M436 245V444M469 183V276M634 372V660M700 788V1130M766 748V930M799 750V925M898 924V1185M931 858V1035M964 803V1008M1030 803V984M1063 885V969M1129 740V1077M1162 652V768"/>
<path stroke="#26a69a" stroke-width="23" d="M73 600V768M172 690V792M205 441V684M271 327V510M337 357V375M436 276V429M469 192V261M634 453V627M700 825V1044M766 846V930M799 804V819M898 981V1071M931 939V996M964 912V957M1030 894V963M1063 897V951M1129 750V900M1162 733V738"/>
<path stroke="#ef5350" stroke-width="2.06" d="M106 352V862M139 695V930M238 352V527M304 332V527M370 218V390M403 198V483M502 180V349M535 264V430M568 312V472M601 408V738M667 426V1104M733 816V1011M832 760V1023M865 1002V1185M997 770V981M1096 797V984M1195 722V928M1228 708V888M1261 840V1023M1294 905V1032M1327 878V1078"/>
<path stroke="#ef5350" stroke-width="23" d="M106 588V780M139 789V822M238 426V498M304 345V402M370 366V387M403 372V414M502 183V303M535 291V363M568 372V438M601 453V618M667 441V1062M733 843V942M832 819V1023M865 1032V1050M997 927V981M1096 912V924M1195 750V774M1228 759V888M1261 897V981M1294 966V969M1327 948V957"/>
<path stroke="#ef5350" stroke-width="12" d="M46 360V537"/>
</g>
</svg>
<rect x="449" y="563" width="644" height="1" fill="#000"/><rect x="449" y="959" width="644" height="1" fill="#000"/>
<g fill="#fff" stroke-width="1.5"><rect x="455" y="570" width="18" height="13" stroke="#e4454a"/><path d="M464 570.5H473V583H464Z" stroke="#2272b4"/><path d="M456 574.5H463M456 578.5H463" stroke="#e4454a"/><path d="M465 574.5H472M465 578.5H472" stroke="#2272b4"/>
<path d="M482.5 572.5H491V583H482.5Z" stroke="#e4454a" fill="#fde3df"/><path d="M493 572H501V583H493Z" stroke="#2272b4"/><rect x="488" y="569.5" width="7" height="4" stroke="#999"/></g>
<text x="508.5" y="582" font-size="12.2" fill="#111">AUS.IDX, H1:  Australia 200 Index</text>
<text class="ax" x="1098" y="580">8186.011</text><text class="ax" x="1098" y="612">8178.889</text><text class="ax" x="1098" y="644">8171.767</text><text class="ax" x="1098" y="676">8164.645</text><text class="ax" x="1098" y="708">8157.523</text><text class="ax" x="1098" y="740">8150.401</text><text class="ax" x="1098" y="772">8143.279</text><text class="ax" x="1098" y="804">8136.157</text><text class="ax" x="1098" y="836">8129.035</text><text class="ax" x="1098" y="868">8121.913</text><text class="ax" x="1098" y="900">8114.791</text><text class="ax" x="1098" y="932">8107.669</text>
<rect x="1096" y="831" width="61" height="14" fill="#26a69a"/><text x="1098" y="843" font-size="12.7" fill="#fff">8127.561</text>
<text class="ax" x="449.5" y="975">1 Nov 2024</text><text class="ax" x="577" y="975">4 Nov 08:00</text><text class="ax" x="705" y="975">4 Nov 16:00</text><text class="ax" x="832" y="975">5 Nov 02:00</text><text class="ax" x="961" y="975">5 Nov 10:00</text>

<rect x="1188.5" y="563.5" width="637" height="396" fill="#fff" stroke="#000"/>
<svg x="1170" y="520" width="750" height="480" viewBox="0 0 1568 1440" preserveAspectRatio="none">
<g stroke="#efefef" stroke-dasharray="9 9" fill="none">
<path stroke-width="3" d="M38 167H1370M38 358H1370M38 455H1370M38 551H1370M38 647H1370M38 743H1370M38 839H1370M38 935H1370M38 1031H1370M38 1127H1370M38 1222H1370"/>
<path stroke-width="2" d="M172 132V1318M306 132V1318M440 132V1318M574 132V1318M708 132V1318M842 132V1318M976 132V1318M1109 132V1318M1243 132V1318"/>
</g>
<path d="M38 256H1370" stroke="#26a69a" stroke-width="3" shape-rendering="crispEdges"/>
<path stroke="#000" stroke-width="2.09" d="M1370 167H1378M1370 358H1378M1370 455H1378M1370 551H1378M1370 647H1378M1370 743H1378M1370 839H1378M1370 935H1378M1370 1031H1378M1370 1127H1378M1370 1222H1378" shape-rendering="crispEdges"/>
<path stroke="#000" stroke-width="2.09" d="M38 1318V1334M306 1318V1334M574 1318V1334M842 1318V1334M1109 1318V1334" shape-rendering="crispEdges"/>
<g shape-rendering="crispEdges" fill="none">
<path stroke="#26a69a" stroke-width="4.2" d="M70 1293V1318M104 1296V1318M138 1305V1318M205 1227V1318M238 1224V1318M271 1266V1318M305 1308V1318M339 1254V1318M372 1245V1318M405 1293V1318M439 1299V1318M472 1305V1318M506 1302V1318M539 1305V1318M573 1305V1318M606 1302V1318M640 1269V1318M673 1281V1318M707 1296V1318M740 1299V1318M773 1293V1318M807 1308V1318M874 1230V1318M907 1200V1318M941 1257V1318M974 1311V1318M1008 1224V1318M1041 1236V1318M1075 1281V1318M1108 1296V1318M1141 1305V1318M1175 1305V1318M1208 1308V1318M1242 1305V1318M1275 1302V1318M1309 1296V1318"/>
<path stroke="#26a69a" stroke-width="2.09" d="M105 1078V1108M172 1070V1095M239 990V1116M272 954V1092M306 980V1013M339 930V1035M373 777V958M440 795V828M473 764V789M540 760V804M641 687V816M674 722V775M741 793V838M808 810V832M842 815V835M875 702V987M909 365V762M942 360V630M1042 298V493M1076 195V318M1276 231V309"/>
<path stroke="#26a69a" stroke-width="23" d="M105 1080V1089M172 1077V1089M239 1038V1095M272 999V1038M306 987V1002M339 936V993M373 798V942M440 801V828M473 768V783M540 768V798M641 732V813M674 729V735M741 795V834M808 819V831M842 819V825M875 741V843M909 606V741M942 375V612M1042 300V399M1076 207V306M1276 231V279"/>
<path stroke="#ef5350" stroke-width="2.09" d="M72 1026V1104M139 1068V1110M206 962V1185M406 770V828M507 756V801M574 760V792M607 777V816M708 725V857M775 795V835M975 357V384M1009 330V466M1109 185V247M1143 165V216M1176 207V285M1209 230V270M1243 265V321M1310 207V261"/>
<path stroke="#ef5350" stroke-width="23" d="M72 1032V1089M139 1080V1089M206 996V1095M406 795V825M507 771V801M574 765V783M607 780V813M708 729V834M775 798V828M975 372V378M1009 378V396M1109 204V219M1143 198V216M1176 210V267M1209 264V267M1243 267V276M1310 237V258"/>
<path stroke="#ef5350" stroke-width="12" d="M44 1008V1035"/>
</g>
</svg>
<rect x="1188" y="563" width="638" height="1" fill="#000"/><rect x="1188" y="959" width="638" height="1" fill="#000"/>
<g fill="#fff" stroke-width="1.5"><rect x="1194" y="570" width="18" height="13" stroke="#e4454a"/><path d="M1203 570.5H1212V583H1203Z" stroke="#2272b4"/><path d="M1195 574.5H1202M1195 578.5H1202" stroke="#e4454a"/><path d="M1204 574.5H1211M1204 578.5H1211" stroke="#2272b4"/>
<path d="M1221.5 572.5H1230V583H1221.5Z" stroke="#e4454a" fill="#fde3df"/><path d="M1232 572H1240V583H1232Z" stroke="#2272b4"/><rect x="1227" y="569.5" width="7" height="4" stroke="#999"/></g>
<text x="1247.5" y="582" font-size="12.2" fill="#111">CHI.IDX, H1:  China A50 Index</text>
<text class="ax" x="1830.5" y="580">13806.930</text><text class="ax" x="1830.5" y="644">13703.820</text><text class="ax" x="1830.5" y="676">13652.265</text><text class="ax" x="1830.5" y="708">13600.710</text><text class="ax" x="1830.5" y="740">13549.155</text><text class="ax" x="1830.5" y="772">13497.600</text><text class="ax" x="1830.5" y="804">13446.045</text><text class="ax" x="1830.5" y="836">13394.490</text><text class="ax" x="1830.5" y="868">13342.935</text><text class="ax" x="1830.5" y="900">13291.380</text><text class="ax" x="1830.5" y="932">13239.825</text>
<rect x="1828" y="598" width="68" height="14" fill="#26a69a"/><text x="1830.5" y="610" font-size="12.7" fill="#fff">13758.775</text>
<text class="ax" x="1188" y="975">1 Nov 2024</text><text class="ax" x="1316" y="975">4 Nov 07:00</text><text class="ax" x="1444" y="975">4 Nov 15:00</text><text class="ax" x="1572" y="975">4 Nov 23:00</text><text class="ax" x="1699.5" y="975">5 Nov 11:00</text>

<rect x="441" y="997" width="1479" height="1" fill="#000"/>
<rect x="432" y="1021" width="1488" height="1" fill="#dcdcdc"/>
<rect x="437" y="995" width="1" height="26" fill="#b0b0b0"/>
<path d="M441.5 997V1021H545V997" fill="#fff" stroke="#000" stroke-width="1.5"/>
<text x="492" y="1015" font-size="14" fill="#111" text-anchor="middle">AUS.IDX,H1</text>
<text x="595" y="1015" font-size="14" fill="#8a8a8a" text-anchor="middle">CHI.IDX,H1</text>
<path d="M1879 1006L1875.5 1010L1879 1014M1901 1006L1904.5 1010L1901 1014" fill="none" stroke="#aaa" stroke-width="1.2"/>

<text x="2" y="1073" font-size="14" fill="#111">For Help, press F1</text>
<g fill="#cfcfcf"><rect x="1049" y="1054" width="1" height="26"/><rect x="1214" y="1054" width="1" height="26"/><rect x="1340" y="1054" width="1" height="26"/><rect x="1428" y="1054" width="1" height="26"/><rect x="1517" y="1054" width="1" height="26"/><rect x="1602" y="1054" width="1" height="26"/><rect x="1689" y="1054" width="1" height="26"/><rect x="1774" y="1054" width="1" height="26"/></g>
<text x="1055.5" y="1073" font-size="14" fill="#111">Default</text>
<path d="M1783 1074V1070M1786 1074V1068M1789 1074V1066M1792 1074V1064M1795 1074V1062M1798 1074V1059" stroke="#2db52d" stroke-width="1.8"/>
<text x="1805.5" y="1073" font-size="14" fill="#111">59.79 ms</text>
</svg>
</body></html>
